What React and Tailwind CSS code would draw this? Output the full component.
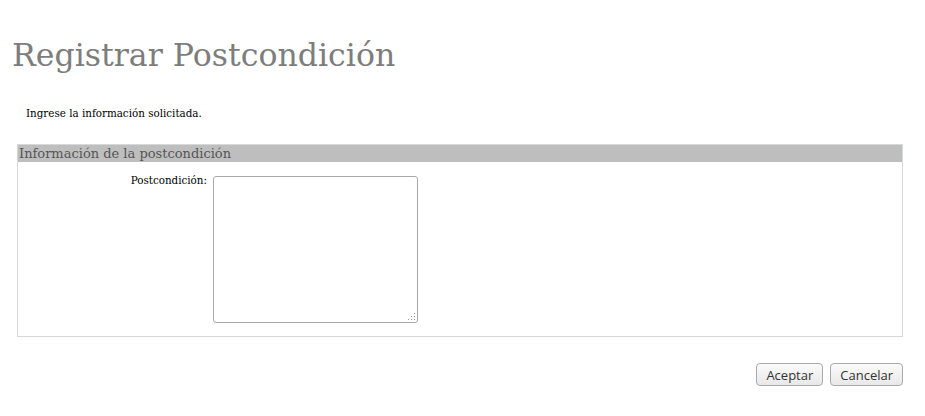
const btn =
  "h-[23px] px-[9px] border border-[#a9a9a9] rounded-[4px] bg-gradient-to-b from-[#fbfbfb] to-[#e8e8e8] text-[13px] leading-[20px] text-[#333] font-['Open_Sans',sans-serif]";

export default function App() {
  return (
    <div className="w-[925px] h-[416px] bg-white overflow-hidden">
      <h1 className="pl-[12px] pt-[35px] text-[31.6px] leading-[40px] text-[#7d7d7d] font-['DejaVu_Serif',serif]">
        Registrar Postcondición
      </h1>
      <p className="pl-[26px] mt-[31px] text-[11.5px] leading-[14px] text-black font-['DejaVu_Serif_Condensed','DejaVu_Serif',serif] font-stretch-condensed">
        Ingrese la información solicitada.
      </p>
      <div className="ml-[17px] mt-[24px] w-[886px] h-[193px] border border-[#d6d9d9] flex flex-col">
        <div className="h-[17px] bg-[#bebebe] pl-[1px] text-[13px] leading-[17px] text-[#555555] font-['DejaVu_Serif',serif]">
          Información de la postcondición
        </div>
        <div className="flex pt-[14px] gap-[6px]">
          <div className="w-[189px] -mt-[3px] text-right text-[11.5px] leading-[14px] text-black font-['DejaVu_Serif_Condensed','DejaVu_Serif',serif] font-stretch-condensed">
            Postcondición:
          </div>
          <div className="relative w-[205px] h-[147px]">
            <textarea className="w-full h-full border border-[#a8a8a8] rounded-[3px] bg-white resize-none outline-none block" />
            <svg
              className="absolute right-[2px] bottom-[2px]"
              width="9"
              height="9"
              viewBox="0 0 9 9"
            >
              <g fill="#9a9a9a">
                <rect x="7" y="1" width="1" height="1" />
                <rect x="7" y="4" width="1" height="1" />
                <rect x="7" y="7" width="1" height="1" />
                <rect x="4" y="4" width="1" height="1" />
                <rect x="4" y="7" width="1" height="1" />
                <rect x="1" y="7" width="1" height="1" />
              </g>
            </svg>
          </div>
        </div>
      </div>
      <div className="flex justify-end gap-[7px] mt-[26px] pr-[22px]">
        <button className={btn}>Aceptar</button>
        <button className={btn}>Cancelar</button>
      </div>
    </div>
  );
}
